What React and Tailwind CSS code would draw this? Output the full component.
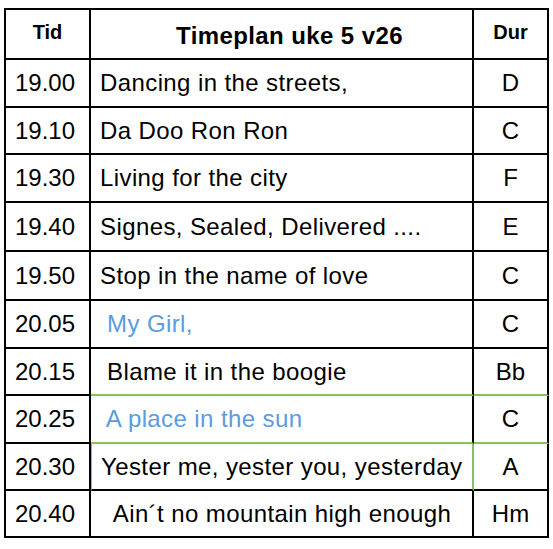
const rows = [
  { tid: "19.00", title: "Dancing in the streets,", dur: "D", h: "h-[48px]" },
  { tid: "19.10", title: "Da Doo Ron Ron", dur: "C", h: "h-[47px]" },
  { tid: "19.30", title: "Living for the city", dur: "F", h: "h-[48px]" },
  { tid: "19.40", title: "Signes, Sealed, Delivered ....", dur: "E", h: "h-[49px]" },
  { tid: "19.50", title: "Stop in the name of love", dur: "C", h: "h-[49px]" },
  { tid: "20.05", title: " My Girl,", dur: "C", h: "h-[48px]", blue: true },
  { tid: "20.15", title: " Blame it in the boogie", dur: "Bb", h: "h-[47px]", greenBottom: true },
  { tid: "20.25", title: " A place in the sun", dur: "C", h: "h-[48px]", blue: true, greenBottom: true },
  { tid: "20.30", title: "Yester me, yester you, yesterday", dur: "A", h: "h-[47px]", greenSides: true },
  { tid: "20.40", title: "  Ain´t no mountain high enough", dur: "Hm", h: "h-[47px]" },
];

const App = () => {
  return (
    <div
      className="w-[553px] h-[549px] bg-white pt-[8px] pl-[4px] text-black"
      style={{ fontFamily: '"Liberation Sans", Arial, sans-serif' }}
    >
      <div className="w-[545px] border-l-2 border-t-2 border-black">
        {/* header */}
        <div className="flex h-[50px]">
          <div className="w-[85px] flex items-center justify-center border-r-2 border-b-2 border-black pb-[4px] text-[20px] font-bold">
            Tid
          </div>
          <div className="w-[383px] flex items-center justify-center border-r-2 border-b-2 border-black pt-[3px] pl-[16px] text-[24px] font-bold tracking-[0.4px]">
            Timeplan uke 5 v26
          </div>
          <div className="w-[75px] flex items-center justify-center border-r-2 border-b-2 border-black pb-[4px] text-[20px] font-bold">
            Dur
          </div>
        </div>

        {rows.map((row) => (
          <div key={row.tid} className={`flex ${row.h} text-[24px]`}>
            <div className="w-[85px] flex items-center pl-[9px] border-r-2 border-b-2 border-black">
              {row.tid}
            </div>
            <div
              className={`w-[383px] flex items-center pl-[9px] border-b-2 whitespace-pre tracking-[0.4px] ${
                row.greenBottom ? "border-[#88c25c]" : "border-black"
              } ${row.greenSides ? "border-l border-l-[#88c25c] border-r-2 border-r-[#88c25c]" : "border-r-2 border-r-black"} ${
                row.blue ? "text-[#5b9be0]" : ""
              }`}
            >
              {row.title}
            </div>
            <div
              className={`w-[75px] flex items-center justify-center border-r-2 border-r-black border-b-2 ${
                row.greenBottom ? "border-b-[#88c25c]" : "border-b-black"
              }`}
            >
              {row.dur}
            </div>
          </div>
        ))}
      </div>
    </div>
  );
};

export default App;
